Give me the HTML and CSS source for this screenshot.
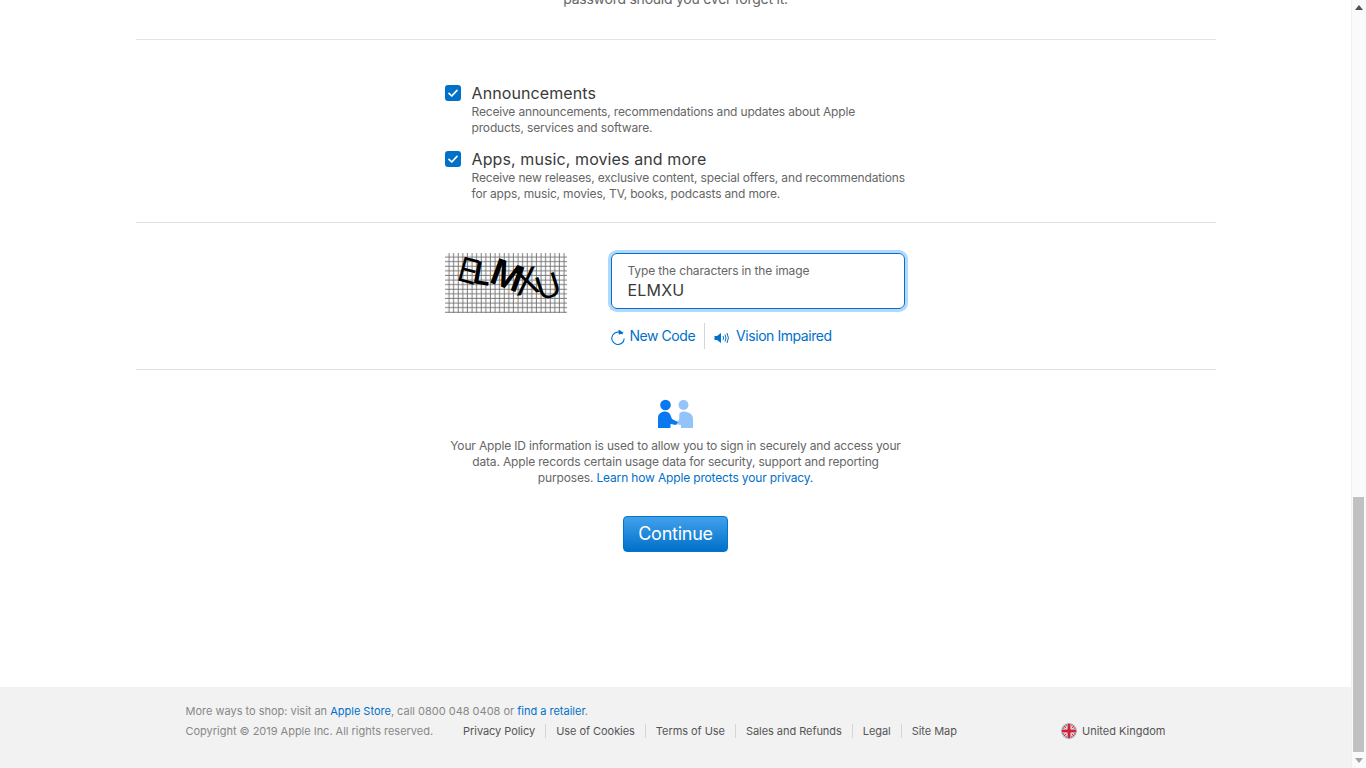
FILE: index.html
```html
<!DOCTYPE html>
<html lang="en">
<head>
<meta charset="utf-8">
<title>Create Your Apple ID</title>
<link rel="stylesheet" href="styles.css">
</head>
<body>
<div class="viewport">
  <div class="page">
    <main class="content">
      <div class="clip-top"><p class="clip-text">password should you ever forget it.</p></div>
      <section class="prefs">
        <div class="pref">
          <span class="check"><svg viewBox="0 0 16 16" width="16" height="16"><path d="M4 8.400l2.800 2.600L12 5.400" fill="none" stroke="#fff" stroke-width="1.700" stroke-linecap="round" stroke-linejoin="round"/></svg></span>
          <div class="pref-text">
            <div class="pref-title">Announcements</div>
            <div class="pref-desc">Receive announcements, recommendations and updates about Apple products, services and software.</div>
          </div>
        </div>
        <div class="pref">
          <span class="check"><svg viewBox="0 0 16 16" width="16" height="16"><path d="M4 8.400l2.800 2.600L12 5.400" fill="none" stroke="#fff" stroke-width="1.700" stroke-linecap="round" stroke-linejoin="round"/></svg></span>
          <div class="pref-text">
            <div class="pref-title">Apps, music, movies and more</div>
            <div class="pref-desc">Receive new releases, exclusive content, special offers, and recommendations for apps, music, movies, TV, books, podcasts and more.</div>
          </div>
        </div>
      </section>
      <section class="captcha">
        <svg class="captcha-img" width="122" height="60" viewBox="0 0 122 60">
          <defs>
            <pattern id="grid" width="4.600" height="4.600" patternUnits="userSpaceOnUse">
              <path d="M4 0V4.600M0 4H4.600" stroke="#6e6e6e" stroke-width=".9" fill="none"/>
            </pattern>
          </defs>
          <rect width="122" height="60" fill="#fff"/>
          <rect width="122" height="60" fill="url(#grid)"/>
          <g class="captcha-letters">
            <text transform="translate(11 27) rotate(15) scale(.8 1)" class="cl-e">E</text>
            <text transform="translate(27 30) rotate(10) scale(.85 1)" class="cl-l">L</text>
            <text transform="translate(43 29) rotate(20)" class="cl-m">M</text>
            <text transform="translate(71 43) rotate(-10)" class="cl-x">X</text>
            <text transform="translate(95 48) rotate(-18)" class="cl-u">U</text>
          </g>
        </svg>
        <div class="captcha-side">
          <div class="field">
            <label class="field-label">Type the characters in the image</label>
            <div class="field-value">ELMXU</div>
          </div>
          <div class="captcha-links">
            <a class="cap-link first">
              <svg class="icon-refresh" width="16" height="18" viewBox="0 0 16 18"><path d="M12.600 6.100A6.200 6.200 0 1 0 14.200 10.400" fill="none" stroke="#0070c9" stroke-width="1.100"/><path d="M8.600 1.600l5 3.200-4.800 2z" fill="#0070c9"/></svg>
              New Code</a>
            <a class="cap-link second">
              <svg class="icon-sound" width="17" height="14" viewBox="0 0 17 14"><path d="M0.500 5H3L7 2V12L3 9H0.500z" fill="#0070c9"/><path d="M9 5Q10.200 7 9 9M11 3.500Q13 7 11 10.500M13 2Q15.800 7 13 12" fill="none" stroke="#0070c9" stroke-width="1"/></svg>
              Vision Impaired</a>
          </div>
        </div>
      </section>
      <section class="privacy">
        <svg class="privacy-icon" width="36" height="30" viewBox="0 0 36 30">
          <circle cx="25.500" cy="6" r="5" fill="#93c3fb"/>
          <path d="M21.500 14Q25.500 11.500 30 13.500Q35 15 35 20V29H23V26L17 25L21 21z" fill="#93c3fb"/>
          <circle cx="7.500" cy="6" r="5.300" fill="#0a78ee"/>
          <path d="M0 29V18Q0.500 13.500 6 12.500Q10.500 12 12 15L14 20L20 23L18 26L12.500 25V29z" fill="#0a78ee"/>
        </svg>
        <p class="privacy-text">Your Apple ID information is used to allow you to sign in securely and access your data. Apple records certain usage data for security, support and reporting purposes. <a class="link">Learn how Apple protects your privacy.</a></p>
        <button class="continue" type="button">Continue</button>
      </section>
    </main>
    <footer class="footer">
      <div class="footer-inner">
        <div class="footer-left">
          <div class="shop">More ways to shop: visit an <a class="link">Apple Store</a>, call 0800 048 0408 or <a class="link">find a retailer</a>.</div>
          <div class="legal">
            <span class="copyright">Copyright © 2019 Apple Inc. All rights reserved.</span>
            <nav class="legal-links">
              <a>Privacy Policy</a><a>Use of Cookies</a><a>Terms of Use</a><a>Sales and Refunds</a><a>Legal</a><a>Site Map</a>
            </nav>
          </div>
        </div>
        <div class="locale">
          <svg width="16" height="16" viewBox="0 0 16 16">
            <defs><clipPath id="flag"><circle cx="8" cy="8" r="7.500"/></clipPath></defs>
            <g clip-path="url(#flag)">
              <rect width="16" height="16" fill="#2b2f52"/>
              <path d="M0 0L16 16M16 0L0 16" stroke="#f2f2f2" stroke-width="3"/>
              <path d="M0 0L16 16M16 0L0 16" stroke="#c8283c" stroke-width="1.200"/>
              <path d="M8 0V16M0 8H16" stroke="#f2f2f2" stroke-width="5"/>
              <path d="M8 0V16M0 8H16" stroke="#d02238" stroke-width="3"/>
            </g>
            <circle cx="8" cy="8" r="7.500" fill="none" stroke="#bbb" stroke-width=".600"/>
          </svg>
          <span>United Kingdom</span>
        </div>
      </div>
    </footer>
  </div>
  <aside class="scrollbar" aria-hidden="true">
    <span class="arrow up"></span>
    <div class="track"><div class="thumb"></div></div>
    <span class="arrow down"></span>
  </aside>
</div>
</body>
</html>
```

FILE: styles.css
```css
* { box-sizing: border-box; }
html, body { margin: 0; height: 100%; overflow: hidden; }
body {
  font-family: Inter, "Liberation Sans", sans-serif;
  color: #333;
  background: #fff;
}
a { color: #0070c9; text-decoration: none; }
.link { color: #0070c9; }

.viewport { display: flex; height: 768px; }
.page { width: 1351px; display: flex; flex-direction: column; }
.content { flex: 1; display: flex; flex-direction: column; width: 1080px; margin: 0 auto; }

.clip-top {
  height: 40px;
  border-bottom: 1px solid #e3e3e3;
  overflow: hidden;
  text-align: center;
}
.clip-text {
  margin: -10px 0 0;
  font-size: 14px;
  line-height: 18px;
  letter-spacing: -.25px;
  color: #666;
}

.prefs {
  height: 183px;
  padding: 43px 0 0 309px;
  border-bottom: 1px solid #e3e3e3;
  display: flex;
  flex-direction: column;
  gap: 13px;
}
.pref { display: flex; width: 470px; }
.check {
  width: 16px;
  height: 16px;
  margin: 2px 11px 0 0;
  border-radius: 3px;
  background: #0070c9;
  flex: none;
  display: flex;
}
.pref-title { font-size: 16px; line-height: 20px; letter-spacing: .1px; color: #3a3a3a; margin-bottom: 1px; }
.pref-desc { font-size: 12px; line-height: 16px; letter-spacing: -.16px; color: #666; width: 436px; }

.captcha {
  height: 147px;
  padding: 30px 0 0 309px;
  border-bottom: 1px solid #e3e3e3;
  display: flex;
}
.captcha-img { flex: none; margin-right: 44px; }
.captcha-letters { font-family: "Liberation Sans", sans-serif; fill: #000; }
.cl-e { font-size: 36px; }
.cl-l { font-size: 33px; font-weight: 700; }
.cl-m { font-size: 38px; font-weight: 700; }
.cl-x { font-size: 38px; }
.cl-u { font-size: 34px; }
.captcha-side { width: 294px; }
.field {
  height: 56px;
  border: 1px solid #0070c9;
  border-radius: 6px;
  box-shadow: 0 0 0 3px rgba(0, 125, 250, .3);
  padding: 10px 16px 0;
}
.field-label { display: block; font-size: 12px; line-height: 14px; letter-spacing: -.13px; color: #666; }
.field-value { font-size: 16px; line-height: 24px; letter-spacing: .2px; color: #3a3a3a; }
.captcha-links { display: flex; margin-top: 14px; height: 26px; align-items: center; }
.cap-link { display: flex; align-items: center; gap: 3px; font-size: 14px; line-height: 18px; letter-spacing: -.45px; }
.cap-link.first { padding-right: 9px; border-right: 1px solid #d6d6d6; height: 26px; margin-right: 9px; }
.cap-link.second { gap: 5px; }
.icon-refresh { margin: 2px 1px 0 -1px; }
.icon-sound { margin: 3px 0 0; }

.privacy {
  padding-top: 29px;
  display: flex;
  flex-direction: column;
  align-items: center;
}
.privacy-icon { display: block; }
.privacy-text {
  width: 460px;
  margin: 9px 0 0;
  font-size: 12px;
  line-height: 16px;
  letter-spacing: -.16px;
  text-align: center;
  color: #666;
}
.continue {
  margin-top: 30px;
  width: 105px;
  height: 36px;
  font: 18px/1 Inter, "Liberation Sans", sans-serif;
  letter-spacing: -.25px;
  color: #fff;
  border: 1px solid #07c;
  border-radius: 4px;
  background: linear-gradient(#42a1ec, #0070c9);
}

.footer {
  height: 81px;
  background: #f2f2f2;
  font-size: 11px;
  line-height: 14px;
  color: #888;
}
.footer-inner {
  width: 980px;
  margin: 0 auto;
  padding-top: 17px;
  display: flex;
  justify-content: space-between;
}
.shop { word-spacing: -.05px; }
.legal { display: flex; margin-top: 6px; }
.copyright { margin-right: 20px; letter-spacing: -.02px; }
.legal-links { display: flex; letter-spacing: -.05px; }
.legal-links a {
  color: #555;
  padding: 0 10px;
  border-left: 1px solid #d6d6d6;
}
.legal-links a:first-child { border-left: 0; }
.locale {
  display: flex;
  align-items: center;
  gap: 5px;
  height: 16px;
  margin-top: 19px;
  color: #555;
}

.scrollbar {
  width: 15px;
  background: #fafafa;
  border-left: 1px solid #efefef;
  display: flex;
  flex-direction: column;
  align-items: center;
}
.track { flex: 1; width: 100%; padding-top: 482px; }
.thumb { height: 255px; margin: 0 2px 0 1px; background: #c1c1c1; }
.arrow { flex: none; width: 0; height: 0; margin: 5px 0; border-left: 4px solid transparent; border-right: 4px solid transparent; }
.arrow.up { border-bottom: 5px solid #505050; }
.arrow.down { border-top: 5px solid #a3a3a3; }
```
